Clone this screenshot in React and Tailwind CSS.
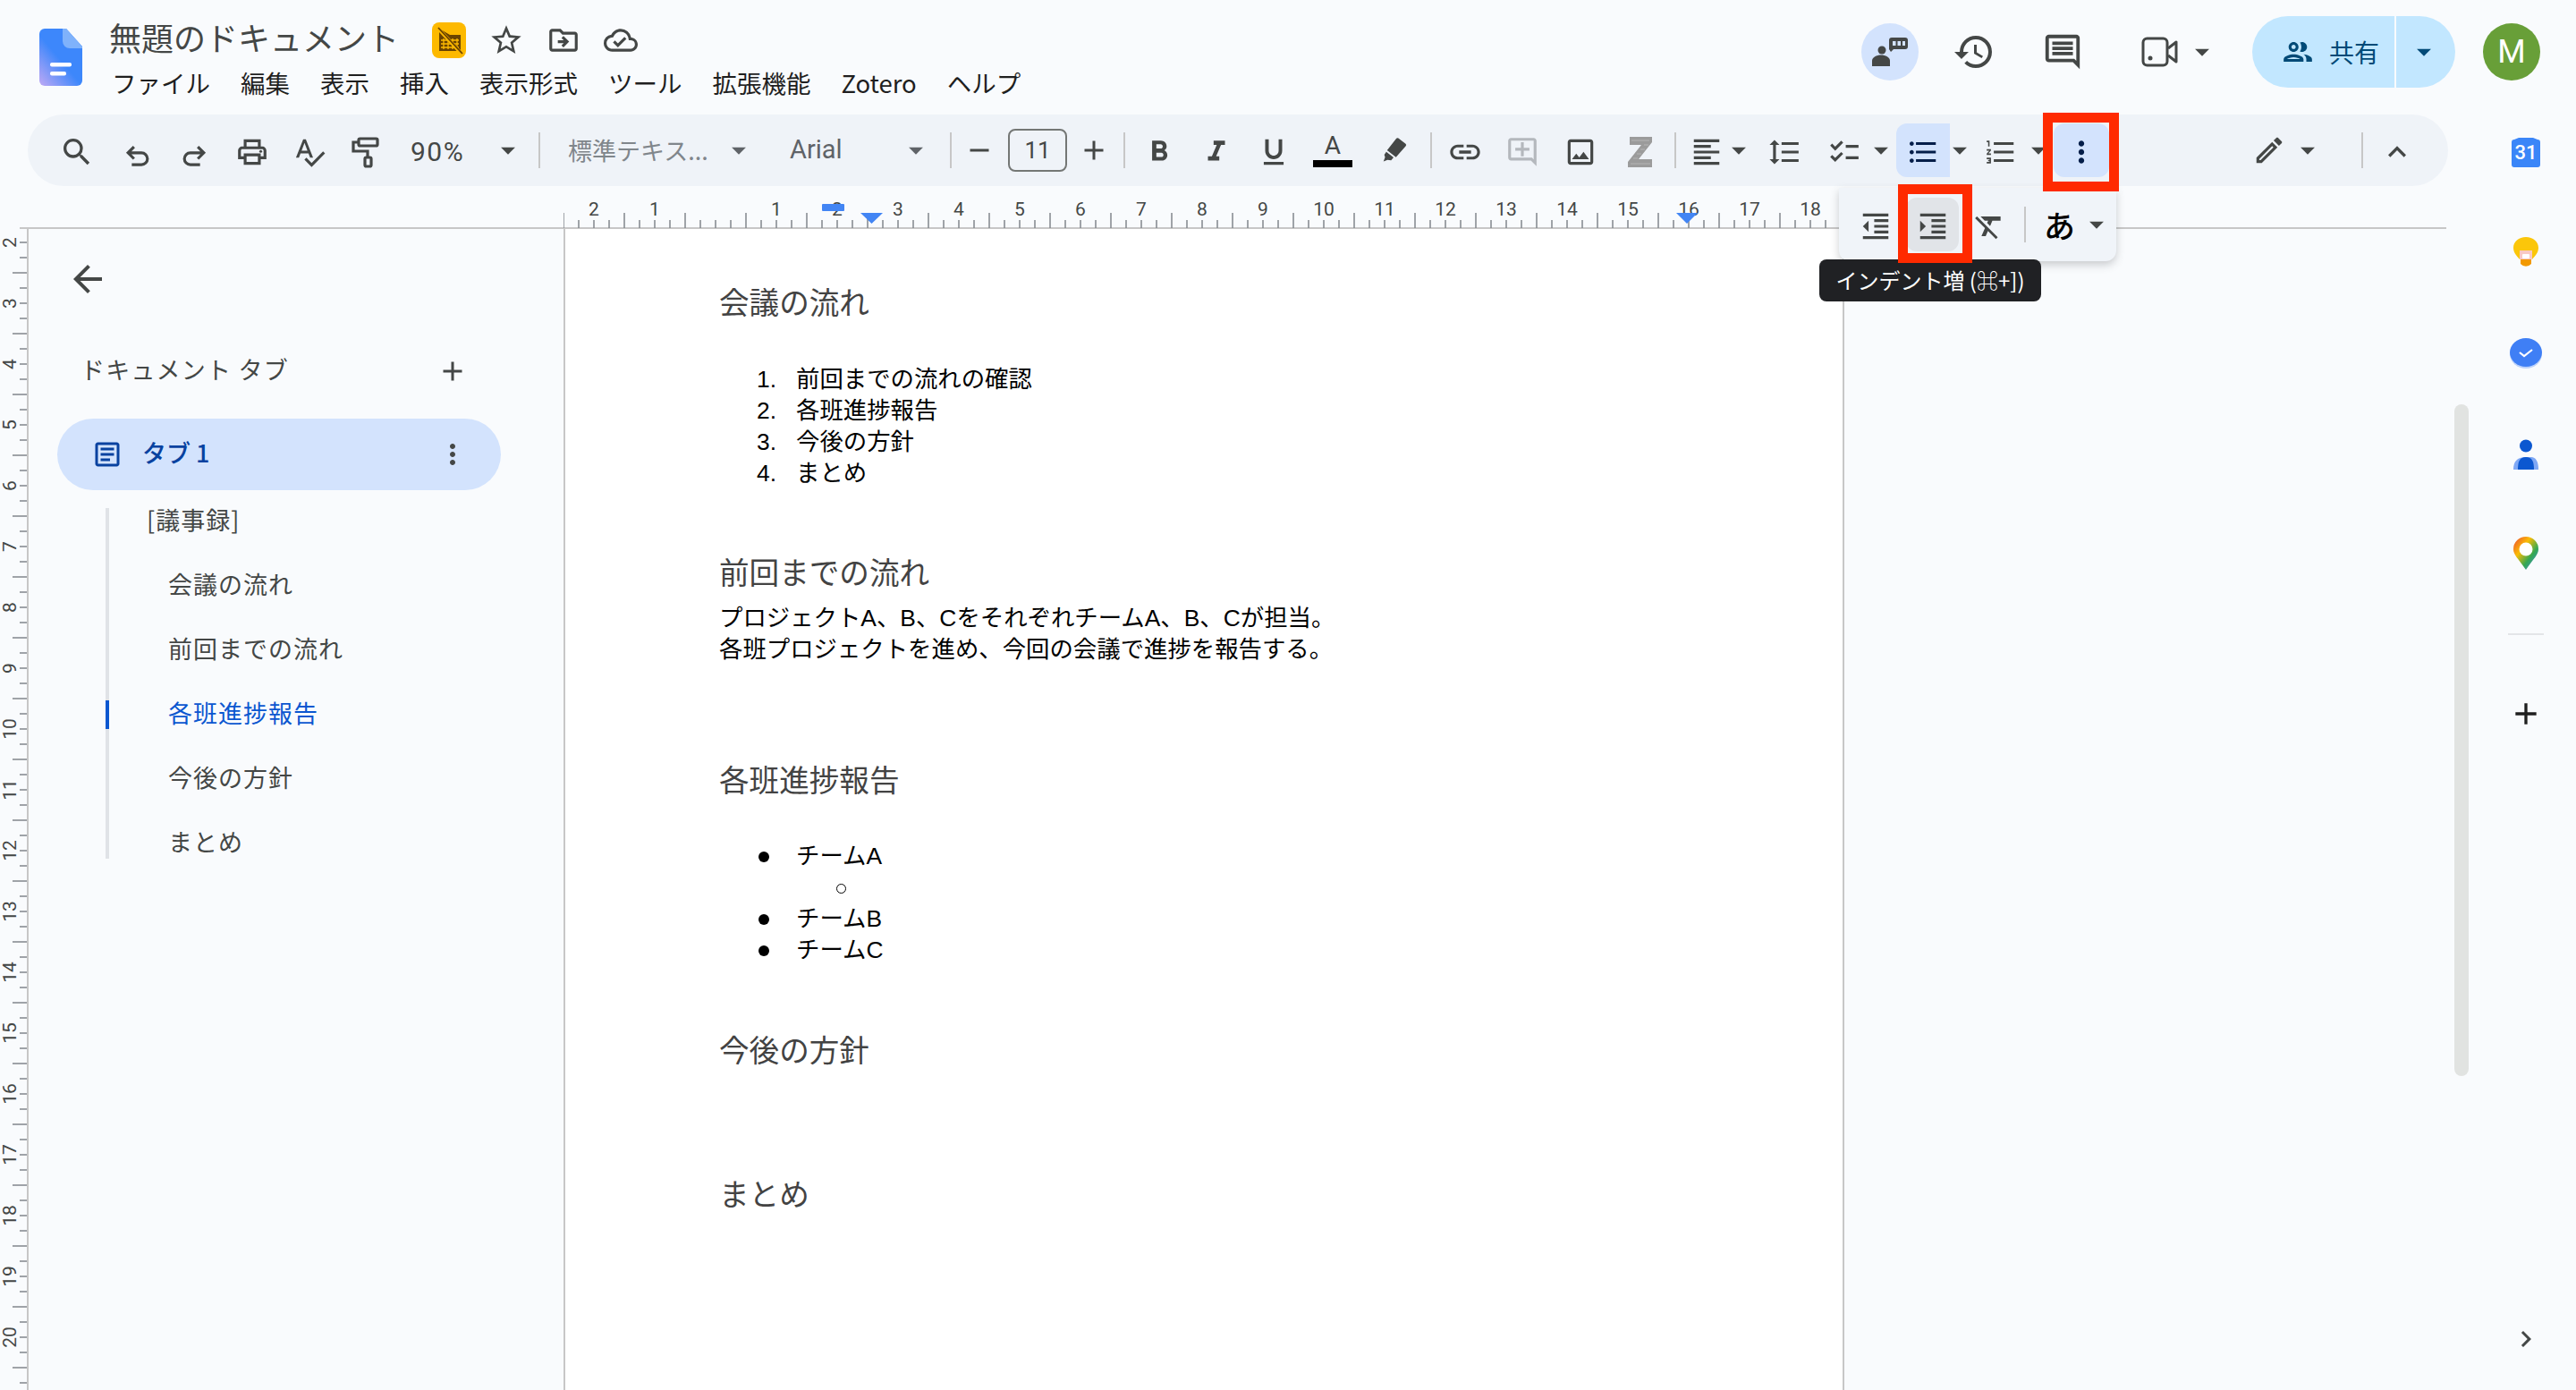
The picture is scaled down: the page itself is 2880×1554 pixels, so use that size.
import React from "react";
import {
  MdSearch,
  MdOutlinePrint,
  MdSpellcheck,
  MdFormatBold,
  MdFormatItalic,
  MdFormatUnderlined,
  MdLink,
  MdOutlineAddComment,
  MdOutlineImage,
  MdFormatAlignLeft,
  MdFormatLineSpacing,
  MdChecklist,
  MdFormatListBulleted,
  MdFormatListNumbered,
  MdMoreVert,
  MdOutlineEdit,
  MdKeyboardArrowUp,
  MdFormatIndentDecrease,
  MdFormatIndentIncrease,
  MdFormatClear,
  MdHistory,
  MdOutlineComment,
  MdOutlinePeople,
  MdArrowBack,
  MdAdd,
  MdRemove,
  MdOutlineArticle,
  MdChevronRight,
  MdStarBorder,
  MdOutlineDriveFileMove,
  MdOutlineCloudDone,
  MdArrowDropDown,
} from "react-icons/md";

const menus = ["ファイル", "編集", "表示", "挿入", "表示形式", "ツール", "拡張機能", "Zotero", "ヘルプ"];
const outline = ["会議の流れ", "前回までの流れ", "各班進捗報告", "今後の方針", "まとめ"];
const agenda = ["前回までの流れの確認", "各班進捗報告", "今後の方針", "まとめ"];

const Cell = ({ className = "", children }) => (
  <div className={`flex shrink-0 items-center justify-center ${className}`}>{children}</div>
);

// toolbar icons sit a little below the bar's centre
const Tool = ({ className = "", children }) => <Cell className={`pt-[3px] ${className}`}>{children}</Cell>;

const Caret = ({ className = "w-[32px]", color = "#444746" }) => (
  <Cell className={className}>
    <MdArrowDropDown size={38} color={color} className="shrink-0" />
  </Cell>
);

const Divider = ({ className = "" }) => <div className={`h-[40px] w-[2px] shrink-0 bg-[#c7c7c7] ${className}`} />;

const TopRuler = () => {
  const ticks = [];
  for (let k = -10; k <= 74; k++) {
    const x = 170 + 17 * k;
    ticks.push(<line key={k} x1={x} x2={x} y1={Math.abs(k % 4) === 2 ? 30 : 38} y2={47} stroke="#80868b" strokeWidth="1.5" />);
  }
  const labels = [-2, -1, 1, 2, 3, 4, 5, 6, 7, 8, 9, 10, 11, 12, 13, 14, 15, 16, 17, 18];
  return (
    <svg width="1432" height="47" className="ml-[608px] block shrink-0">
      {ticks}
      {labels.map((n) => (
        <text key={n} x={170 + 68 * n} y={33} textAnchor="middle" fontSize="21" fill="#444746" fontFamily="Roboto, sans-serif">
          {Math.abs(n)}
        </text>
      ))}
      <rect x="289" y="20" width="25" height="8" rx="1" fill="#4285f4" />
      <path d="M332 30h25l-12.5 12z" fill="#4285f4" />
      <path d="M1244 30h24l-12 12z" fill="#4285f4" />
    </svg>
  );
};

const SideRuler = () => {
  const ticks = [];
  for (let k = 0; k <= 76; k++) {
    const y = 15 + 17 * k;
    ticks.push(<line key={k} x1={k % 4 === 2 ? 14 : 22} x2={30} y1={y} y2={y} stroke="#80868b" strokeWidth="1.5" />);
  }
  const labels = Array.from({ length: 19 }, (_, i) => i + 2);
  return (
    <div className="h-full w-[32px] shrink-0 border-r-2 border-[#c7c7c7]">
      <svg width="30" height="1298" className="block">
        {ticks}
        {labels.map((n) => (
          <text
            key={n}
            x={0}
            y={0}
            transform={`translate(18 ${135 + 68 * n - 256}) rotate(-90)`}
            textAnchor="middle"
            fontSize="21"
            fill="#444746"
            fontFamily="Roboto, sans-serif"
          >
            {n}
          </text>
        ))}
      </svg>
    </div>
  );
};

const DocsLogo = () => (
  <svg width="48" height="64" viewBox="0 0 48 64" className="shrink-0">
    <defs>
      <linearGradient id="docBody" x1="0.1" y1="1" x2="0.5" y2="0.55">
        <stop offset="0" stopColor="#b3a6f5" />
        <stop offset="1" stopColor="#3d87fb" />
      </linearGradient>
    </defs>
    <path d="M6 0H30L48 20V58a6 6 0 0 1-6 6H6a6 6 0 0 1-6-6V6a6 6 0 0 1 6-6z" fill="url(#docBody)" />
    <path d="M26 0h4l18 20v2H34a8 8 0 0 1-8-8z" fill="#7fb2fb" />
    <rect x="12" y="38" width="24" height="4.5" rx="2" fill="#fff" />
    <rect x="12" y="48" width="18" height="4.5" rx="2" fill="#fff" />
  </svg>
);

const NoEditBadge = () => (
  <div className="mt-[8px] ml-[37px] flex h-[40px] w-[38px] shrink-0 items-center justify-center rounded-lg bg-[#fdb900]">
    <svg width="38" height="40" viewBox="0 0 38 40">
      <path d="M8 7l12 7h12v18H8z" fill="#6b4300" />
      <path d="M13 18v12M18 18v12M23 18v12M28 18v12M10 20h20M10 24h20M10 28h20" stroke="#fdb900" strokeWidth="1.3" />
      <path d="M6 6l28 30" stroke="#fdb900" strokeWidth="4" />
      <path d="M7 6l27 29" stroke="#6b4300" strokeWidth="1.8" />
    </svg>
  </div>
);

const ChatBubble = () => (
  <div className="flex h-[64px] w-[64px] shrink-0 items-center justify-center rounded-full bg-[#d3e3fd]">
    <svg width="40" height="32" viewBox="0 0 40 32" fill="#444746">
      <circle cx="11" cy="14" r="4.5" />
      <path d="M0 32v-6c0-4 5-6.5 10-6.5s10 2.500 10 6.500v6z" />
      <path d="M19 3a3 3 0 0 1 3-3h15a3 3 0 0 1 3 3v7a3 3 0 0 1-3 3H24l-3 3-2-3z" />
      <rect x="23" y="4" width="3.500" height="5" fill="#d3e3fd" />
      <rect x="28.500" y="4" width="3.500" height="5" fill="#d3e3fd" />
      <rect x="34" y="4" width="3" height="5" fill="#d3e3fd" />
    </svg>
  </div>
);

const MeetIcon = () => (
  <svg width="42" height="34" viewBox="0 0 42 34" fill="none" stroke="#444746" strokeWidth="3" className="shrink-0">
    <rect x="2" y="2" width="27" height="30" rx="4.500" />
    <path d="M30 13l9-7v22l-9-7" strokeLinejoin="round" />
    <circle cx="10" cy="24" r="2.500" fill="#444746" stroke="none" />
  </svg>
);

const UndoIcon = ({ flip = false }) => (
  <svg
    width="40"
    height="40"
    viewBox="0 0 24 24"
    fill="none"
    stroke="#444746"
    strokeWidth="1.9"
    className={flip ? "shrink-0 -scale-x-100" : "shrink-0"}
  >
    <path d="M9.500 8.500l-4 4 4 4M5.500 12.500h9a4 4 0 0 1 0 8H8" />
  </svg>
);

const PaintRoller = () => (
  <svg width="40" height="40" viewBox="0 0 40 40" fill="none" stroke="#444746" strokeWidth="3.200" className="shrink-0">
    <rect x="13" y="5" width="21" height="8" rx="1.500" />
    <path d="M13 9H7v10h16v7" />
    <rect x="20" y="26" width="7" height="10" rx="1.500" />
  </svg>
);

const HighlighterIcon = () => (
  <svg width="36" height="36" viewBox="0 0 40 40" fill="#444746" className="shrink-0">
    <path d="M26 5l9 7a2 2 0 0 1 .2 2.800L23 28.500 12 20 23.300 5.500A2 2 0 0 1 26 5z" />
    <path d="M11 22l9 7-3 3.500-4.500-.5-5 2 2-5.500-1-3z" />
  </svg>
);

const ZoteroIcon = () => (
  <svg width="28" height="34" viewBox="0 0 28 34" className="shrink-0">
    <path d="M2 0h25v6L12 25h15v9H0v-6L15 9H2z" fill="#9b9b9b" />
    <path d="M4 4h20M18 9h5M14 14h5M10 19h5M6 24h5M3 30h22" stroke="#b5b5b5" strokeWidth="1.200" />
  </svg>
);

const Toolbar = () => (
  <div className="ml-[31px] flex h-[80px] w-[2706px] items-center rounded-full bg-[#eff3f8] pl-[23px] text-[#444746]">
    <Tool className="w-[64px]"><MdSearch size={40} className="shrink-0" /></Tool>
    <Tool className="w-[72px]"><UndoIcon /></Tool>
    <Tool className="w-[54px]"><UndoIcon flip /></Tool>
    <Tool className="w-[76px]"><MdOutlinePrint size={38} className="shrink-0" /></Tool>
    <Tool className="w-[52px]"><MdSpellcheck size={38} className="shrink-0" /></Tool>
    <Tool className="w-[72px]"><PaintRoller /></Tool>
    <div className="ml-[15px] w-[93px] shrink-0 pt-[2px] font-['Roboto',sans-serif] text-[30px] tracking-[1.5px]">90%</div>
    <Caret />
    <Divider className="ml-[18px]" />
    <div className="ml-[31px] w-[175px] shrink-0 text-[27px] whitespace-nowrap text-[#80868b]">標準テキス...</div>
    <Caret color="#5f6368" />
    <div className="ml-[41px] w-[125px] shrink-0 font-['Roboto',sans-serif] text-[29px] text-[#5f6368]">Arial</div>
    <Caret color="#5f6368" />
    <Divider className="ml-[22px]" />
    <Cell className="ml-[8px] w-[46px]"><MdRemove size={36} className="shrink-0" /></Cell>
    <div className="ml-[9px] flex h-[48px] w-[66px] shrink-0 items-center justify-center rounded-lg border-2 border-[#747775] font-['Roboto',sans-serif] text-[26px]">
      11
    </div>
    <Cell className="ml-[7px] w-[46px]"><MdAdd size={36} className="shrink-0" /></Cell>
    <Divider className="ml-[10px]" />
    <Tool className="ml-[6px] w-[64px]"><MdFormatBold size={38} className="shrink-0" /></Tool>
    <Tool className="w-[64px]"><MdFormatItalic size={38} className="shrink-0" /></Tool>
    <Tool className="w-[64px]"><MdFormatUnderlined size={38} className="shrink-0" /></Tool>
    <div className="flex h-[44px] w-[68px] shrink-0 flex-col items-center justify-start">
      <span className="h-[33px] font-['Roboto',sans-serif] text-[28px] leading-[33px]">A</span>
      <span className="h-[8px] w-[44px] bg-black" />
    </div>
    <Cell className="w-[68px]"><HighlighterIcon /></Cell>
    <Divider className="ml-[7px]" />
    <Tool className="w-[74px]"><MdLink size={40} className="shrink-0" /></Tool>
    <Tool className="w-[54px]"><MdOutlineAddComment size={38} color="#b4b8bd" className="shrink-0" /></Tool>
    <Tool className="w-[76px]"><MdOutlineImage size={38} className="shrink-0" /></Tool>
    <Tool className="w-[58px]"><ZoteroIcon /></Tool>
    <Divider className="ml-[9px]" />
    <Tool className="ml-[12px] w-[44px]"><MdFormatAlignLeft size={38} className="shrink-0" /></Tool>
    <Caret className="w-[28px]" />
    <Tool className="w-[74px]"><MdFormatLineSpacing size={38} className="shrink-0" /></Tool>
    <Tool className="w-[60px]"><MdChecklist size={38} className="shrink-0" /></Tool>
    <Caret className="w-[22px]" />
    <Tool className="ml-[6px] h-[60px] w-[60px] rounded-l-xl bg-[#d3e3fd]">
      <MdFormatListBulleted size={38} color="#041e49" className="shrink-0" />
    </Tool>
    <Caret className="w-[22px]" />
    <Tool className="w-[70px]"><MdFormatListNumbered size={38} className="shrink-0" /></Tool>
    <Caret className="w-[14px]" />
    <Tool className="ml-[10px] h-[60px] w-[62px] rounded-xl bg-[#d3e3fd]">
      <MdMoreVert size={38} color="#041e49" className="shrink-0" />
    </Tool>
    <Cell className="ml-[154px] w-[50px]"><MdOutlineEdit size={38} className="shrink-0" /></Cell>
    <Caret className="w-[36px]" />
    <Divider className="ml-[42px]" />
    <Tool className="w-[76px]"><MdKeyboardArrowUp size={40} className="shrink-0" /></Tool>
  </div>
);

const Sidebar = () => (
  <aside className="w-[598px] shrink-0 pt-[32px] text-[#444746]">
    <MdArrowBack size={48} className="ml-[42px]" />
    <div className="mt-[49px] ml-[32px] flex h-[60px] w-[496px] items-center justify-between pr-[36px] pl-[26px]">
      <span className="pb-[3px] text-[27px] tracking-[1.2px] whitespace-nowrap">ドキュメント タブ</span>
      <MdAdd size={36} />
    </div>
    <div className="mt-[23px] ml-[32px] flex h-[80px] w-[496px] items-center rounded-full bg-[#d3e3fd] pr-[36px] pl-[38px] text-[#0842a0]">
      <MdOutlineArticle size={36} className="shrink-0" />
      <span className="ml-[21px] pb-[3px] text-[27px] font-medium whitespace-nowrap">タブ 1</span>
      <MdMoreVert size={36} className="ml-auto shrink-0 text-[#444746]" />
    </div>
    <div className="mt-[20px] ml-[86px] flex h-[392px] flex-col gap-[42px] border-l-4 border-[#e0e3e7] pl-[42px] text-[27px] tracking-[1px]">
      <div className="flex h-[30px] items-center pb-[3px]">[議事録]</div>
      {outline.map((item, i) => (
        <div
          key={item}
          className={`relative flex h-[30px] items-center pb-[3px] pl-[24px] whitespace-nowrap ${i === 2 ? "text-[#0b57d0]" : ""}`}
        >
          {i === 2 && <span className="absolute top-[-1px] left-[-46px] h-[32px] w-[4px] bg-[#0b57d0]" />}
          {item}
        </div>
      ))}
    </div>
  </aside>
);

const Heading = ({ className = "", children }) => (
  <h3 className={`h-[40px] text-[33.6px] leading-[40px] text-[#434343] ${className}`}>{children}</h3>
);

const Page = () => (
  <main className="h-full w-[1432px] shrink-0 border-x-2 border-[#c7c7c7] bg-white pt-[64px] pl-[172px] font-['Liberation_Sans','Noto_Sans_CJK_JP',sans-serif] text-[26.4px] leading-[35px] text-black">
    <Heading>会議の流れ</Heading>
    <ol className="mt-[47px] pl-[42px]">
      {agenda.map((item, i) => (
        <li key={item} className="flex h-[35px]">
          <span className="w-[44px] shrink-0">{i + 1}.</span>
          {item}
        </li>
      ))}
    </ol>
    <Heading className="mt-[75px]">前回までの流れ</Heading>
    <p className="mt-[12px]">
      プロジェクトA、B、Cをそれぞれチーム<span>A</span>、B、Cが担当。
      <br />
      各班プロジェクトを進め、今回の会議で進捗を報告する。
    </p>
    <Heading className="mt-[110px]">各班進捗報告</Heading>
    <ul className="mt-[46px] pl-[44px]">
      <li className="flex h-[35px] items-center">
        <span className="h-[12px] w-[12px] shrink-0 rounded-full bg-black" />
        <span className="ml-[30px]">チームA</span>
      </li>
      <li className="flex h-[35px] items-center pt-[2px] pl-[87px]">
        <span className="h-[11px] w-[11px] rounded-full border-[1.5px] border-black" />
      </li>
      <li className="flex h-[35px] items-center">
        <span className="h-[12px] w-[12px] shrink-0 rounded-full bg-black" />
        <span className="ml-[30px]">チームB</span>
      </li>
      <li className="flex h-[35px] items-center">
        <span className="h-[12px] w-[12px] shrink-0 rounded-full bg-black" />
        <span className="ml-[30px]">チームC</span>
      </li>
    </ul>
    <Heading className="mt-[76px]">今後の方針</Heading>
    <Heading className="mt-[121px]">まとめ</Heading>
  </main>
);

const SidePanel = () => (
  <aside className="flex h-full w-[120px] shrink-0 flex-col items-center pt-[26px] pb-[39px] pl-[8px]">
    <svg width="32" height="33" viewBox="0 0 32 33" className="shrink-0">
      <path d="M3 2l5-2h16l5 2a3 3 0 0 1 3 3v25a3 3 0 0 1-3 3H3a3 3 0 0 1-3-3V5a3 3 0 0 1 3-3z" fill="#3b86f8" />
      <text x="16" y="24" textAnchor="middle" fontSize="22" fontWeight="500" fill="#fff" fontFamily="Roboto, sans-serif">31</text>
    </svg>
    <svg width="28" height="37" viewBox="0 0 28 37" className="mt-[78px] shrink-0">
      <path d="M8 30a8 8 0 0 0 12 0v-6H8z" fill="#f29900" />
      <path d="M14 0c8 0 14 5 14 12 0 6-4 9-7 13H7C4 21 0 18 0 12 0 5 6 0 14 0z" fill="#fbc60a" />
      <path d="M7 15h14v10H7z" fill="#f8c9c4" />
      <rect x="10" y="19" width="8" height="5" rx="1" fill="#fff" />
    </svg>
    <svg width="36" height="34" viewBox="0 0 36 34" className="mt-[76px] shrink-0">
      <ellipse cx="18" cy="18" rx="18" ry="16" fill="#bcd2fb" />
      <ellipse cx="18" cy="16" rx="18" ry="16" fill="#3f7ff5" />
      <path d="M11 16l5 4 9-7" fill="none" stroke="#fff" strokeWidth="2.200" />
    </svg>
    <svg width="28" height="35" viewBox="0 0 28 35" className="mt-[78px] shrink-0">
      <path d="M0 35c0-9 4-14 14-14h6c5 0 8 5 8 14z" fill="#7fa8f5" />
      <path d="M5 35c0-9 2-14 9-14s9 5 9 14z" fill="#0b57d0" />
      <circle cx="14" cy="8.500" r="7" fill="#0b57d0" />
    </svg>
    <svg width="28" height="37" viewBox="0 0 28 37" className="mt-[75px] shrink-0">
      <defs>
        <linearGradient id="mapPin" x1="0" y1="0" x2="1" y2="1">
          <stop offset="0" stopColor="#ea4335" />
          <stop offset="0.35" stopColor="#fbbc04" />
          <stop offset="0.65" stopColor="#34a853" />
          <stop offset="1" stopColor="#4285f4" />
        </linearGradient>
      </defs>
      <path d="M14 0a14 14 0 0 1 14 14c0 6-5 10-14 23C5 24 0 20 0 14A14 14 0 0 1 14 0z" fill="url(#mapPin)" />
      <circle cx="14" cy="14" r="7.500" fill="#fff" />
    </svg>
    <div className="mt-[71px] h-[2px] w-[40px] shrink-0 bg-[#e3e5e8]" />
    <MdAdd size={40} className="mt-[68px] shrink-0 text-[#1f1f1f]" />
    <MdChevronRight size={36} className="mt-auto shrink-0 text-[#444746]" />
  </aside>
);

const Overlays = () => (
  <>
    <div className="absolute top-[210px] left-[2056px] flex h-[82px] w-[310px] items-center rounded-b-xl bg-[#f0f4f9] pl-[10px] text-[#444746] shadow-[0_4px_10px_rgba(60,64,67,0.25)]">
      <Tool className="w-[62px]"><MdFormatIndentDecrease size={38} className="shrink-0" /></Tool>
      <Tool className="ml-[3px] h-[60px] w-[59px] rounded-xl bg-[#e1e4e8]">
        <MdFormatIndentIncrease size={38} className="shrink-0" />
      </Tool>
      <Tool className="w-[68px]"><MdFormatClear size={38} className="shrink-0" /></Tool>
      <Divider className="ml-[5px]" />
      <div className="ml-[20px] w-[35px] shrink-0 pb-[2px] text-[35px] leading-none font-medium text-black">あ</div>
      <Caret className="ml-[9px] w-[30px]" />
    </div>
    <div className="absolute top-[290px] left-[2034px] flex h-[47px] w-[248px] items-center justify-center rounded-lg bg-[#202124] pb-[2px] text-[24px] whitespace-nowrap text-white">
      インデント増 (⌘+])
    </div>
    <div className="absolute top-[126px] left-[2284px] h-[88px] w-[85px] border-[11px] border-[#ff2a00]" />
    <div className="absolute top-[206px] left-[2122px] h-[88px] w-[83px] border-[11px] border-[#ff2a00]" />
  </>
);

export default function App() {
  return (
    <div className="relative h-[1554px] w-[2880px] overflow-hidden bg-[#f9fbfd] font-['Noto_Sans_CJK_JP','Noto_Sans',sans-serif]">
      <header className="flex h-[128px]">
        <div className="mt-[32px] ml-[44px]">
          <DocsLogo />
        </div>
        <div className="ml-[30px] text-[#444746]">
          <div className="mt-[18px] flex h-[46px] items-center">
            <span className="w-[324px] text-[36px] leading-[46px] whitespace-nowrap">無題のドキュメント</span>
            <NoEditBadge />
            <MdStarBorder size={40} className="mt-[8px] ml-[25px] shrink-0" />
            <MdOutlineDriveFileMove size={38} className="mt-[8px] ml-[25px] shrink-0" />
            <MdOutlineCloudDone size={38} className="mt-[8px] ml-[26px] shrink-0" />
          </div>
          <nav className="mt-[9px] flex h-[40px] items-center gap-[34px] pl-[3px] text-[27.5px] whitespace-nowrap text-[#1f1f1f]">
            {menus.map((m) => (
              <span key={m}>{m}</span>
            ))}
          </nav>
        </div>
        <div className="ml-auto flex h-[116px] items-center pr-[40px]">
          <ChatBubble />
          <Cell className="w-[124px]"><MdHistory size={48} color="#444746" className="shrink-0" /></Cell>
          <Cell className="w-[74px]"><MdOutlineComment size={46} color="#444746" className="shrink-0" /></Cell>
          <Cell className="ml-[37px] w-[70px]"><MeetIcon /></Cell>
          <Caret className="w-[24px]" />
          <div className="ml-[44px] flex h-[80px] w-[227px] items-center rounded-full bg-[#c2e7ff] text-[#004a77]">
            <div className="flex h-full w-[159px] items-center justify-end">
              <MdOutlinePeople size={38} className="shrink-0" />
              <span className="mr-[17px] ml-[16px] text-[28px] whitespace-nowrap">共有</span>
            </div>
            <div className="h-full w-[2px] bg-[#f9fbfd]" />
            <Caret className="w-[62px]" color="#004a77" />
          </div>
          <div className="ml-[31px] flex h-[64px] w-[64px] items-center justify-center rounded-full bg-[#689f38] font-['Roboto',sans-serif] text-[36px] text-white">
            M
          </div>
        </div>
      </header>
      <div className="flex h-[1426px]">
        <div className="w-[2760px] shrink-0">
          <Toolbar />
          <div className="ml-[22px] h-[48px] w-[2713px] border-b-2 border-[#c7c7c7]">
            <TopRuler />
          </div>
          <div className="flex h-[1298px]">
            <SideRuler />
            <Sidebar />
            <Page />
            <div className="mt-[196px] ml-[682px] h-[751px] w-[16px] shrink-0 rounded-full bg-[#e1e3e1]" />
          </div>
        </div>
        <SidePanel />
      </div>
      <Overlays />
    </div>
  );
}
